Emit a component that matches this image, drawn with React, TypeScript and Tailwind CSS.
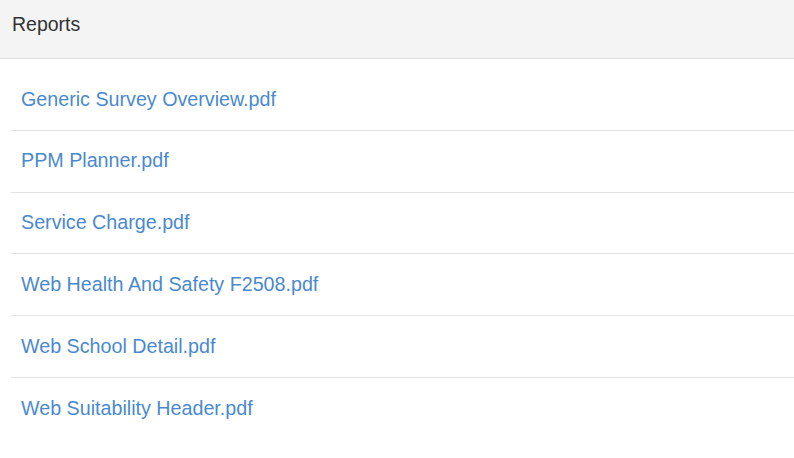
const reports = [
  "Generic Survey Overview.pdf",
  "PPM Planner.pdf",
  "Service Charge.pdf",
  "Web Health And Safety F2508.pdf",
  "Web School Detail.pdf",
  "Web Suitability Header.pdf",
];

export default function App() {
  return (
    <div className="min-h-[458px] w-[794px] bg-white font-['Liberation_Sans',Arial,sans-serif]">
      <div className="flex h-[59px] items-center border-b border-[#dddddd] bg-[#f4f4f4] pb-[8px] pl-[12px] text-[19.5px] text-[#333333]">
        Reports
      </div>
      <ul className="ml-[11px] pt-[10px]">
        {reports.map((name, i) => (
          <li
            key={name}
            className={
              "flex h-[61.8px] items-center pl-[10px] " +
              (i < reports.length - 1 ? "border-b border-[#e3e3e3]" : "")
            }
          >
            <a href="#" className="text-[19.7px] text-[#4a89cf]">
              {name}
            </a>
          </li>
        ))}
      </ul>
    </div>
  );
}
